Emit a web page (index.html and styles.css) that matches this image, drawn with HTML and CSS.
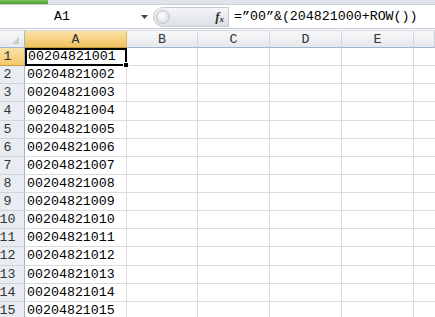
FILE: index.html
```html
<!DOCTYPE html>
<html>
<head>
<meta charset="utf-8">
<link rel="stylesheet" href="styles.css">
</head>
<body>
<div class="top"><div class="green"></div></div>
<div class="fbar">
  <div class="namebox">A1</div>
  <div class="dd"><svg width="7" height="4" viewBox="0 0 7 4"><path d="M0 0H7L3.5 4Z" fill="#444"/></svg></div>
  <div class="pill">
    <div class="knob"></div>
    <span class="fx">f<sub>x</sub></span>
  </div>
  <div class="formula">=”00”&amp;(204821000+ROW())</div>
</div>
<div class="sheet">
  <div class="hd corner"><svg width="7" height="7" viewBox="0 0 7 7"><path d="M7 0V7H0Z" fill="#c9cdd2"/></svg></div>
  <div class="hd col sel">A</div>
  <div class="hd col">B</div>
  <div class="hd col">C</div>
  <div class="hd col">D</div>
  <div class="hd col">E</div>
  <div class="hd col last"></div>
</div>
<div class="rows" id="rows"></div>
<script>
var r = document.getElementById('rows');
var h = '';
for (var i = 1; i <= 15; i++) {
  var n = String(204821000 + i);
  h += '<div class="rh' + (i === 1 ? ' sel' : '') + '">' + i + '</div>' +
       '<div class="c ca' + (i === 1 ? ' active' : '') + '">00' + n + (i === 1 ? '<span class="handle"></span>' : '') + '</div>' +
       '<div class="c"></div><div class="c"></div><div class="c"></div><div class="c"></div><div class="c last"></div>';
}
r.innerHTML = h;
</script>
</body>
</html>
```
FILE: styles.css
```css
* { box-sizing: border-box; }
html, body { margin: 0; padding: 0; background: #fff; overflow: hidden; }
body { width: 435px; height: 317px; font-family: "Liberation Mono", "DejaVu Sans Mono", monospace; color: #000; }

.top { height: 5px; background: #dfe4ea; border-bottom: 1px solid #c9d0d8; display: flex; }
.green { width: 48px; height: 100%; background: linear-gradient(#7cc05a, #4f9a35); }

.fbar { height: 24px; display: flex; align-items: center; background: #fff; border-bottom: 1px solid #c3c9d1; }
.namebox { width: 138px; font-size: 13.3px; padding-left: 54px; }
.dd { width: 12px; display: flex; align-items: center; justify-content: center; }
.pill { margin-left: 3px; width: 76px; height: 20px; border-radius: 10px 0 0 10px; background: linear-gradient(#f4f5f7, #dde1e6); border: 1px solid #c6ccd3; display: flex; align-items: center; justify-content: space-between; padding: 0 4px 0 2px; }
.knob { width: 14px; height: 14px; border-radius: 50%; background: radial-gradient(circle at 40% 40%, #ffffff, #cfd4da); border: 1px solid #c3c8ce; }
.fx { font-family: "Liberation Serif", serif; font-style: italic; font-size: 13px; color: #333; font-weight: bold; }
.fx sub { font-size: 9px; vertical-align: -1px; }
.formula { margin-left: 5px; font-size: 13.3px; white-space: nowrap; }

.sheet, .rows { display: grid; grid-template-columns: 25px 102px 71px 72px 72px 72px 1fr; }
.sheet { margin-top: 1px; border-top: 1px solid #d5dae0; }
.hd { height: 17px; background: linear-gradient(#f7f8f9, #e5e8ec); border-right: 1px solid #d0d4d9; border-bottom: 1px solid #9eb6ce; font-size: 13.3px; color: #333; display: flex; align-items: center; justify-content: center; }
.hd.sel { background: linear-gradient(#fbe2a8, #f1c15f); border-bottom-color: #c29b49; border-right-color: #e2b65d; }
.corner { justify-content: flex-end; align-items: flex-end; padding: 0 5px 3px 0; border-right-color: #9eb6ce; }

.rh { height: 18.14px; background: #e9ecf0; border-right: 1px solid #9eb6ce; border-bottom: 1px solid #d0d4d9; font-size: 13.3px; color: #333; display: flex; align-items: center; justify-content: center; padding-right: 9px; }
.rh.sel { background: linear-gradient(#fbe2a8, #f3c766); border-bottom-color: #c29b49; }
.c { height: 18.14px; border-right: 1px solid #dadcdd; border-bottom: 1px solid #dadcdd; font-size: 13.3px; line-height: 17px; padding-left: 2px; white-space: nowrap; }
.c.last { border-right: none; }
.c.active { position: relative; border: 2px solid #000; padding-left: 1px; line-height: 14px; }
.handle { position: absolute; right: -4px; bottom: -4px; width: 6px; height: 6px; background: #000; border: 1px solid #fff; }
```
